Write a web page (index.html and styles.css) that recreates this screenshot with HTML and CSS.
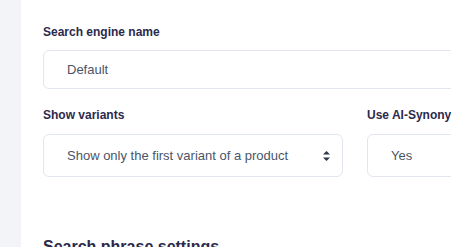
FILE: index.html
```html
<!DOCTYPE html>
<html lang="en">
<head>
  <meta charset="UTF-8">
  <title>Search engine settings</title>
  <link rel="stylesheet" href="styles.css">
</head>
<body>
  <div class="layout">
    <aside class="sidebar"></aside>

    <main class="content">
      <div class="field">
        <label class="label" for="engineName">Search engine name</label>
        <input class="input wide" id="engineName" type="text" value="Default">
      </div>

      <div class="row">
        <div class="field">
          <label class="label">Show variants</label>
          <div class="select">
            <span>Show only the first variant of a product</span>
            <svg class="arrows" width="7" height="10" viewBox="0 0 7 10">
              <path d="M3.5 0 L7 3.6 L0 3.6 Z" fill="#2d3748"/>
              <path d="M0 6.4 L7 6.4 L3.5 10 Z" fill="#2d3748"/>
            </svg>
          </div>
        </div>
        <div class="field">
          <label class="label">Use AI-Synonyms</label>
          <div class="select">
            <span>Yes</span>
          </div>
        </div>
      </div>

      <h2 class="section-title">Search phrase settings</h2>
    </main>
  </div>
</body>
</html>
```

FILE: styles.css
```css
body {
  margin: 0;
  font-family: 'Liberation Sans', Arial, sans-serif;
  background: #fff;
  overflow: hidden;
}

.layout {
  display: flex;
  min-height: 247px;
}

.sidebar {
  width: 21px;
  flex-shrink: 0;
  background: #f3f4f8;
}

.content {
  padding: 25px 0 0 22px;
  flex-shrink: 0;
}

.label {
  display: block;
  font-size: 12px;
  line-height: 14px;
  font-weight: bold;
  color: #2b2a4c;
  margin-bottom: 11px;
}

.input, .select {
  box-sizing: border-box;
  border: 1px solid #e2e6ee;
  border-radius: 6px;
  font-family: inherit;
  font-size: 13px;
  color: #4a5568;
  background: #fff;
}

.input {
  display: block;
  height: 39px;
  padding: 0 23px;
  margin: 0;
  outline: none;
}

.wide {
  width: 640px;
}

.row {
  display: grid;
  grid-template-columns: 300px 300px;
  gap: 24px;
  margin-top: 19px;
}

.row .label {
  margin-bottom: 12px;
}

.select {
  height: 43px;
  display: flex;
  align-items: center;
  justify-content: space-between;
  padding: 0 12px 0 23px;
}

.arrows {
  display: block;
}

.section-title {
  font-size: 16px;
  line-height: 20px;
  font-weight: bold;
  color: #2b2a4c;
  margin: 60px 0 0;
}
```
